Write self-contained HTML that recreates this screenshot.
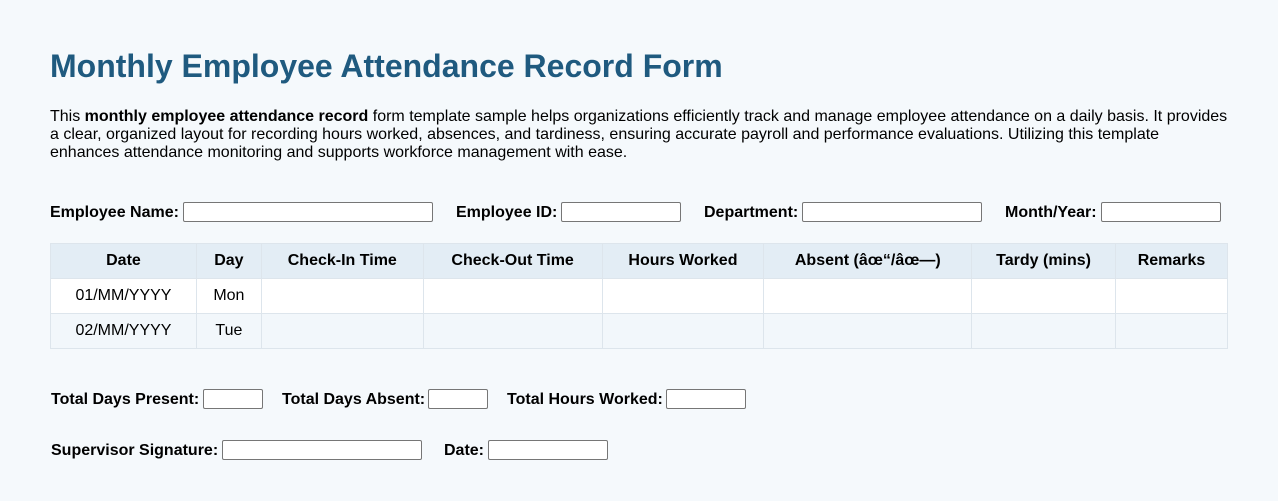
<!DOCTYPE html>
<html><head><meta charset="utf-8"><style>
body{margin:0;width:1278px;height:501px;background:#f5f9fc;font-family:"Liberation Sans",Arial,sans-serif;color:#000;position:relative;overflow:hidden}
h1{position:absolute;left:50px;top:48px;margin:0;font-size:32px;color:#1f5a7f;font-weight:bold}
p{position:absolute;left:50px;top:108px;width:1178px;margin:0;font-size:16px;line-height:18px}
.l{position:absolute;font-size:16px;font-weight:bold;line-height:20px}
.i{position:absolute;height:18px;border:1px solid #767676;border-radius:2px;background:#fff;box-sizing:content-box}
table{position:absolute;left:50px;top:243px;border-collapse:collapse;font-size:16px;width:1178px}
td,th{border:1px solid #dde5ec;text-align:center;height:34px;padding:0}
th{background:#e3edf5;font-weight:bold}
tr.w td{background:#fff}
tr.g td{background:#f2f7fb}
</style></head><body>
<h1>Monthly Employee Attendance Record Form</h1>
<p>This <b>monthly employee attendance record</b> form template sample helps organizations efficiently track and manage employee attendance on a daily basis. It provides a clear, organized layout for recording hours worked, absences, and tardiness, ensuring accurate payroll and performance evaluations. Utilizing this template enhances attendance monitoring and supports workforce management with ease.</p>

<div class="l" style="left:50px;top:203px">Employee Name:</div><div class="i" style="left:183px;top:202px;width:248px"></div>
<div class="l" style="left:456px;top:203px">Employee ID:</div><div class="i" style="left:561px;top:202px;width:118px"></div>
<div class="l" style="left:704px;top:203px">Department:</div><div class="i" style="left:802px;top:202px;width:178px"></div>
<div class="l" style="left:1005px;top:203px">Month/Year:</div><div class="i" style="left:1101px;top:202px;width:118px"></div>

<table>
<colgroup><col style="width:146px"><col style="width:65px"><col style="width:162px"><col style="width:179px"><col style="width:162px"><col style="width:208px"><col style="width:144px"><col style="width:112px"></colgroup>
<tr><th>Date</th><th>Day</th><th>Check-In Time</th><th>Check-Out Time</th><th>Hours Worked</th><th>Absent (âœ“/âœ—)</th><th>Tardy (mins)</th><th>Remarks</th></tr>
<tr class="w"><td>01/MM/YYYY</td><td>Mon</td><td></td><td></td><td></td><td></td><td></td><td></td></tr>
<tr class="g"><td>02/MM/YYYY</td><td>Tue</td><td></td><td></td><td></td><td></td><td></td><td></td></tr>
</table>

<div class="l" style="left:51px;top:390px">Total Days Present:</div><div class="i" style="left:203px;top:389px;width:58px"></div>
<div class="l" style="left:282px;top:390px">Total Days Absent:</div><div class="i" style="left:428px;top:389px;width:58px"></div>
<div class="l" style="left:507px;top:390px">Total Hours Worked:</div><div class="i" style="left:666px;top:389px;width:78px"></div>
<div class="l" style="left:51px;top:441px">Supervisor Signature:</div><div class="i" style="left:222px;top:440px;width:198px"></div>
<div class="l" style="left:444px;top:441px">Date:</div><div class="i" style="left:488px;top:440px;width:118px"></div>
</body></html>
